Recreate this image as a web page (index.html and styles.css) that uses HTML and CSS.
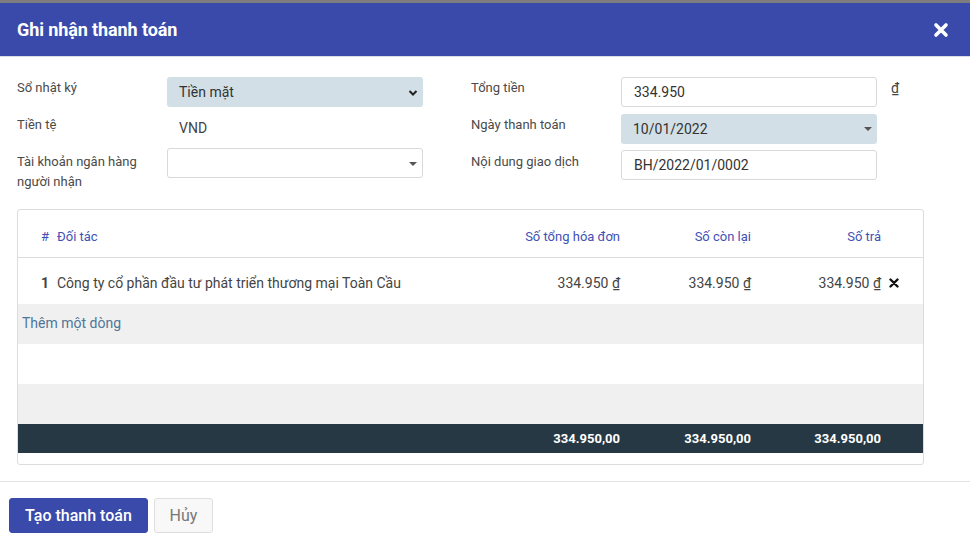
FILE: index.html
```html
<!DOCTYPE html>
<html>
<head>
<meta charset="utf-8">
<link rel="stylesheet" href="styles.css">
</head>
<body>
<div class="backdrop"></div>
<div class="modal">
  <div class="modal-header">
    <h4 class="title">Ghi nhận thanh toán</h4>
    <svg class="close" width="16" height="16" viewBox="0 0 16 16"><path d="M3 3 L13 13 M13 3 L3 13" stroke="#fff" stroke-width="3.6" stroke-linecap="round"/></svg>
  </div>
  <div class="modal-body">
    <div class="form">
      <div class="label">Sổ nhật ký</div>
      <div class="control filled">Tiền mặt
        <svg class="chev" width="10" height="8" viewBox="0 0 10 8"><path d="M1.5 2 L5 5.5 L8.5 2" fill="none" stroke="#222" stroke-width="2"/></svg>
      </div>
      <div></div>
      <div class="label">Tổng tiền</div>
      <div class="control bordered">334.950</div>
      <div class="cur">₫</div>

      <div class="label">Tiền tệ</div>
      <div class="value">VND</div>
      <div></div>
      <div class="label">Ngày thanh toán</div>
      <div class="control filled">10/01/2022<span class="caret"></span></div>
      <div></div>

      <div class="label">Tài khoản ngân hàng<br>người nhận</div>
      <div class="control bordered left3"><span class="caret"></span></div>
      <div></div>
      <div class="label">Nội dung giao dịch</div>
      <div class="control bordered right3">BH/2022/01/0002</div>
      <div></div>
    </div>

    <div class="table">
      <div class="row head">
        <div class="c-num">#</div>
        <div class="c-name">Đối tác</div>
        <div class="c-amt">Số tổng hóa đơn</div>
        <div class="c-amt">Số còn lại</div>
        <div class="c-amt">Số trả</div>
        <div></div>
      </div>
      <div class="row data">
        <div class="c-num strong">1</div>
        <div class="c-name">Công ty cổ phần đầu tư phát triển thương mại Toàn Cầu</div>
        <div class="c-amt">334.950 ₫</div>
        <div class="c-amt">334.950 ₫</div>
        <div class="c-amt">334.950 ₫</div>
        <div class="c-del"><svg width="10" height="10" viewBox="0 0 10 10"><path d="M1.5 1.5 L8.5 8.5 M8.5 1.5 L1.5 8.5" stroke="#111" stroke-width="2.4" stroke-linecap="round"/></svg></div>
      </div>
      <div class="add">Thêm một dòng</div>
      <div class="empty"></div>
      <div class="empty grey"></div>
      <div class="row foot">
        <div></div>
        <div></div>
        <div class="c-amt">334.950,00</div>
        <div class="c-amt">334.950,00</div>
        <div class="c-amt">334.950,00</div>
        <div></div>
      </div>
      <div class="tail"></div>
    </div>
  </div>
  <div class="modal-footer">
    <button class="btn primary">Tạo thanh toán</button>
    <button class="btn secondary">Hủy</button>
  </div>
</div>
</body>
</html>
```

FILE: styles.css
```css
* { box-sizing: border-box; }
html, body { margin: 0; padding: 0; background: #fff; }
body { font-family: Roboto, "Noto Sans", "Liberation Sans", sans-serif; font-size: 13px; color: #4c4c4c; width: 970px; height: 553px; overflow: hidden; }

.backdrop { height: 3px; background: #7d7d7d; }

.modal-header {
  height: 54px;
  background: #3a4aab;
  display: flex;
  align-items: center;
  justify-content: space-between;
  padding: 0 21px 0 17px;
  border-bottom: 1px solid #d6dde6;
}
.title { margin: 0; color: #fff; font-size: 18px; font-weight: 700; letter-spacing: -0.1px; }
.close { display: block; }

.modal-body { padding: 20px 45px 0 17px; }

.form {
  display: grid;
  grid-template-columns: 150px 256px 48px 150px 256px 30px;
  grid-template-rows: 30px 30px 30px;
  row-gap: 7px;
  line-height: 20px;
}
.label { color: #4a4a4a; padding-top: 1px; }
.control {
  height: 30px;
  border-radius: 3px;
  padding: 0 12px;
  display: flex;
  align-items: center;
  position: relative;
  font-size: 14px;
  color: #333;
}
.left3 { margin-top: -3px; }
.right3 { margin-top: -1px; }
.filled { background: #d2dfe6; }
.bordered { border: 1px solid #d9d9d9; background: #fff; }
.chev { position: absolute; right: 5px; top: 12px; }
.caret {
  position: absolute; right: 5px; top: 13px;
  width: 0; height: 0;
  border-left: 4.5px solid transparent;
  border-right: 4.5px solid transparent;
  border-top: 4.5px solid #555;
}
.value { padding: 4px 12px 0; font-size: 14px; color: #444; }
.cur { padding: 1px 0 0 14px; font-size: 14px; color: #444; }

.table {
  margin-top: 28px;
  border: 1px solid #dcdcdc;
  border-radius: 3px;
  width: 907px;
}
.row {
  display: grid;
  grid-template-columns: 39px 433px 130px 131px 130px 42px;
  align-items: center;
}
.c-num { padding-left: 23px; }
.c-amt { text-align: right; }
.head { height: 48px; border-bottom: 1px solid #dcdcdc; color: #3f51b5; padding-top: 6px; }
.data { height: 46px; font-size: 14px; color: #444; padding-top: 3px; }
.data .c-name { color: #444; }
.strong { font-weight: 700; }
.c-del { padding-left: 8px; display: flex; align-items: center; }
.add { height: 40px; background: #f0f0f0; color: #4e7699; font-size: 14px; padding: 11px 4px 0; }
.empty { height: 40px; background: #fff; }
.empty.grey { background: #f0f0f0; }
.foot { height: 29px; background: #263843; color: #fff; font-weight: 700; }
.tail { height: 11px; }

.modal-footer {
  margin-top: 16px;
  border-top: 1px solid #e3e3e3;
  padding: 16px 9px;
  display: flex;
  gap: 6px;
}
.btn {
  height: 35px;
  border-radius: 3px;
  font-family: Roboto, "Noto Sans", sans-serif;
  font-size: 15px;
  padding: 0 10px;
  cursor: pointer;
}
.primary { background: #3a4aab; color: #fff; border: 1px solid #3a4aab; font-weight: 500; width: 139px; font-size: 16px; }
.secondary { background: #f8f8f8; color: #777; border: 1px solid #dedede; width: 59px; font-size: 16px; }
```
